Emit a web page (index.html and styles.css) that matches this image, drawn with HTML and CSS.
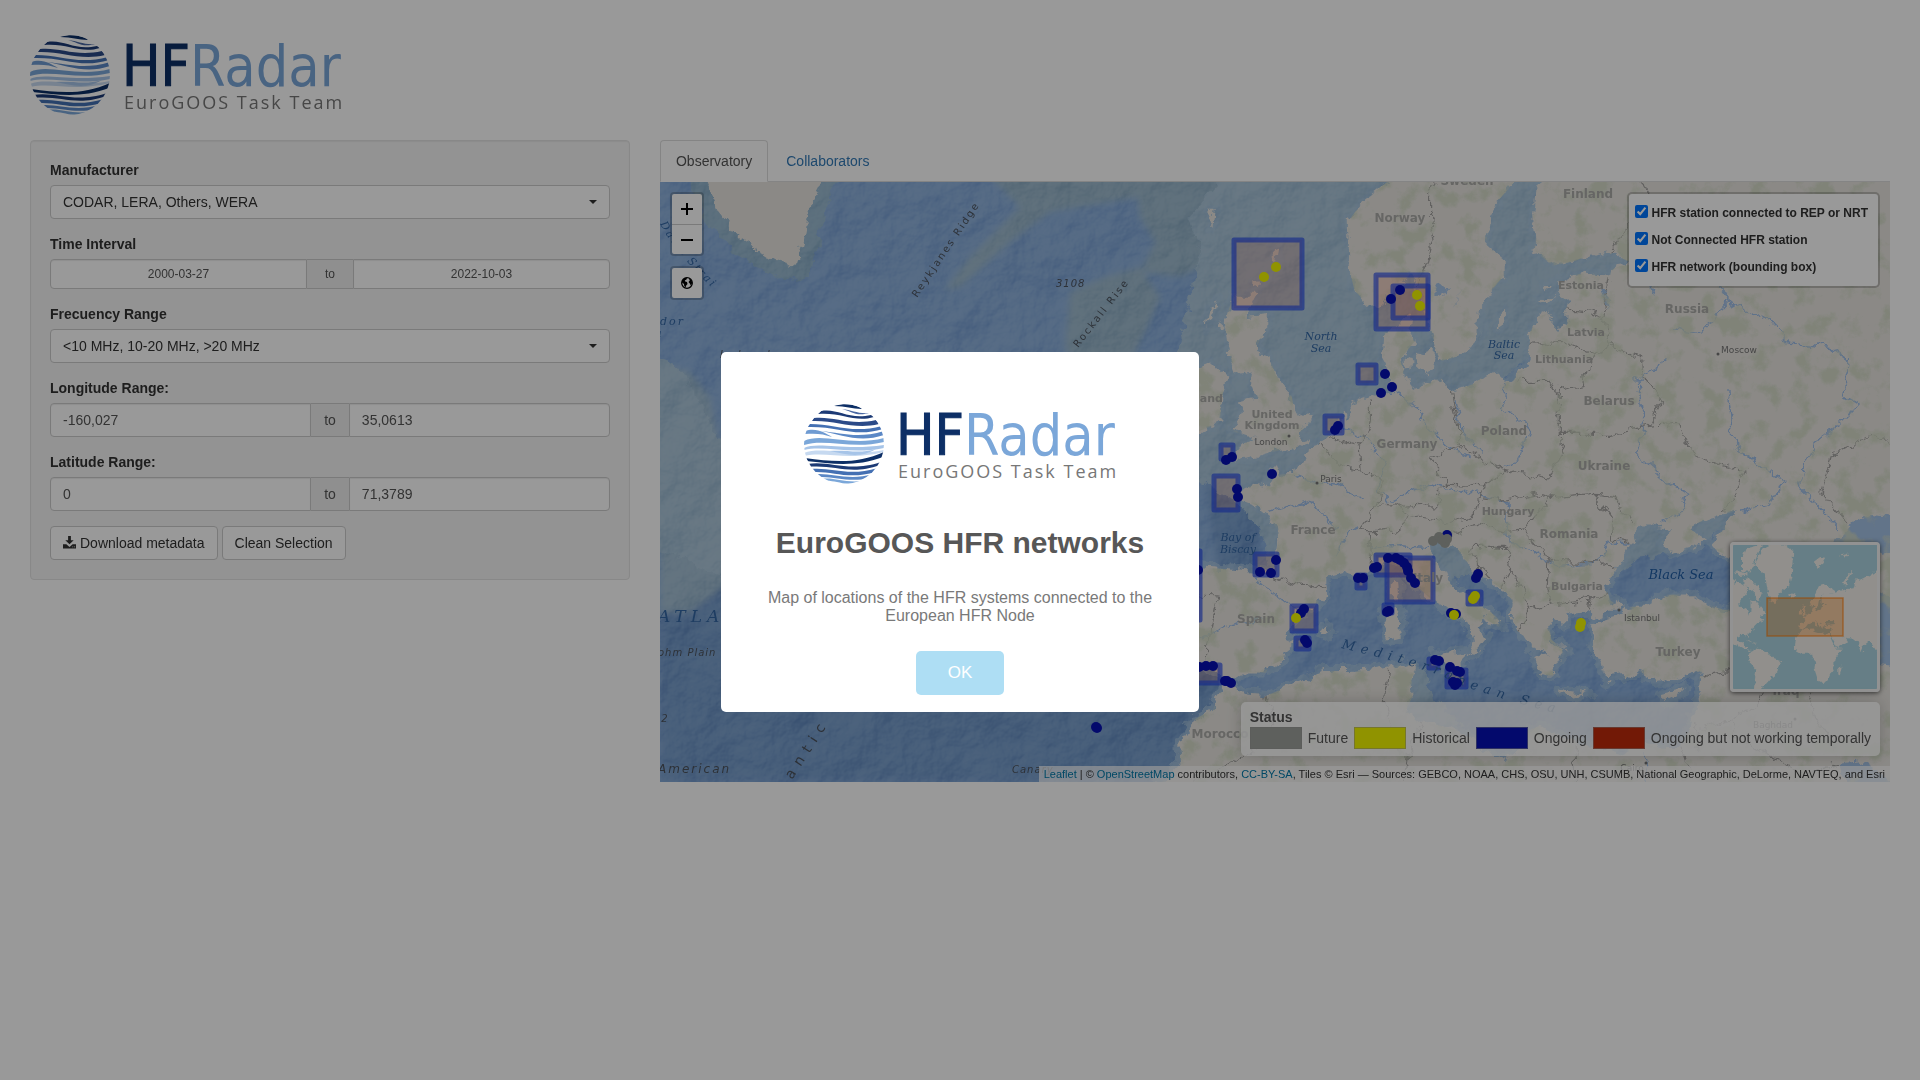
FILE: index.html
```html
<!DOCTYPE html>
<html lang="en">
<head>
<meta charset="utf-8">
<meta name="viewport" content="width=device-width, initial-scale=1">
<title>EuroGOOS HFR networks</title>
<link rel="stylesheet" href="styles.css">
</head>
<body>
<svg class="defs" aria-hidden="true">
  <defs>
    <clipPath id="globe-clip"><circle cx="40" cy="41" r="40"/></clipPath>
    <symbol id="logo" viewBox="0 0 312 82">
      <g clip-path="url(#globe-clip)">
        <path fill="#0d2f66" d="M30 3C40 0 52 1 58 6 48 6 42 3 30 3z"/>
        <path fill="#1c3a75" d="M17 8C34 5 44 17 67 12L70 14C50 20 38 9 14 11z"/>
        <path fill="#4a68a3" d="M38 6C48 7 54 11 65 10 52 14 47 8 38 6z"/>
        <path fill="#2b4a88" d="M10 15C30 13 46 23 72 17L75 21C50 27 32 17 8 18z"/>
        <path fill="#4470b3" d="M6 21C30 21 48 31 78 23L79 26C50 35 36 23 3 24z"/>
        <path fill="#6f9bd2" d="M1 28C12 24 22 30 28 34 20 31 12 30 1 31z"/>
        <path fill="#5b88c6" d="M17 28C38 30 54 36 80 28L80 32C56 40 38 32 17 28z"/>
        <path fill="#7ba7d9" d="M0 38C18 29 46 44 80 35L80 39C48 47 22 35 0 42z"/>
        <path fill="#a6c4e8" d="M0 45C14 38 40 48 80 42L80 45C48 52 20 42 0 47z"/>
        <path fill="#c6d9f0" d="M0 50C18 43 44 54 80 47L80 49C44 58 22 48 0 53z"/>
        <path fill="#a6c4e8" d="M26 48C44 47 56 51 72 46 56 56 40 51 26 48z"/>
        <path fill="#0d2f66" d="M1 55C30 59 54 61 80 49L79 54C52 64 30 61 2 58z"/>
        <path fill="#1c3a75" d="M3 61C26 57 44 70 77 59L76 62C46 73 30 61 4 64z"/>
        <path fill="#4470b3" d="M7 66C28 64 44 74 74 65L72 69C44 77 30 68 9 69z"/>
        <path fill="#5b88c6" d="M12 71C30 70 44 78 70 71L66 75C44 80 32 73 14 74z"/>
        <path fill="#7ba7d9" d="M17 76C30 74 40 80 58 78L52 81C38 82 30 77 20 78z"/>
      </g>
      <text class="logo-hf" x="92" y="52">HF</text>
      <text class="logo-radar" x="160" y="52">Radar</text>
      <text class="logo-sub" x="94" y="75">EuroGOOS Task Team</text>
    </symbol>
  </defs>
</svg>

<header class="page-header">
  <svg class="logo" role="img" aria-label="HFRadar EuroGOOS Task Team"><use href="#logo"/></svg>
</header>

<main class="row">
  <div class="col-side">
    <form class="well">
      <div class="group">
        <label for="maker">Manufacturer</label>
        <div class="select"><select id="maker"><option>CODAR, LERA, Others, WERA</option></select></div>
      </div>
      <div class="group">
        <label for="date-from">Time Interval</label>
        <div class="range small">
          <input id="date-from" type="text" value="2000-03-27">
          <span class="addon">to</span>
          <input type="text" aria-label="Time interval end" value="2022-10-03">
        </div>
      </div>
      <div class="group">
        <label for="freq">Frecuency Range</label>
        <div class="select"><select id="freq"><option>&lt;10 MHz, 10-20 MHz, &gt;20 MHz</option></select></div>
      </div>
      <div class="group">
        <label for="lon-min">Longitude Range:</label>
        <div class="range">
          <input id="lon-min" type="text" value="-160,027">
          <span class="addon">to</span>
          <input type="text" aria-label="Longitude maximum" value="35,0613">
        </div>
      </div>
      <div class="group">
        <label for="lat-min">Latitude Range:</label>
        <div class="range">
          <input id="lat-min" type="text" value="0">
          <span class="addon">to</span>
          <input type="text" aria-label="Latitude maximum" value="71,3789">
        </div>
      </div>
      <div class="actions">
        <button type="button" class="btn"><svg class="btn-icon" viewBox="0 0 14 14" aria-hidden="true"><path fill="currentColor" d="M5.5 0h3v4.500h3L7 9 2.500 4.500h3zM0 9h3.600L7 11.800 10.400 9H14v4.500H0zM10 11.200v1h1v-1zm2 0v1h1v-1z"/></svg>Download metadata</button>
        <button type="button" class="btn">Clean Selection</button>
      </div>
    </form>
  </div>

  <div class="col-main">
    <nav class="tabs">
      <a class="tab active" href="#observatory">Observatory</a>
      <a class="tab" href="#collaborators">Collaborators</a>
    </nav>
    <section class="map" id="observatory">
      <svg class="canvas" viewBox="0 0 1230 600" preserveAspectRatio="xMidYMid slice">
        <defs>
          <filter id="rough" x="0" y="0" width="1230" height="600" filterUnits="userSpaceOnUse">
            <feTurbulence type="fractalNoise" baseFrequency="0.09" numOctaves="4" seed="4"/>
            <feDisplacementMap in="SourceGraphic" scale="13" xChannelSelector="R" yChannelSelector="G"/>
          </filter>
          <filter id="relief" x="0" y="0" width="1230" height="600" filterUnits="userSpaceOnUse" color-interpolation-filters="sRGB">
            <feTurbulence type="fractalNoise" baseFrequency="0.022" numOctaves="5" seed="11"/>
            <feColorMatrix values="0 0 0 0 0  0 0 0 0 0  0 0 0 0 0  1 0 0 0 0"/>
            <feDiffuseLighting surfaceScale="9" diffuseConstant=".62" lighting-color="#fff"><feDistantLight azimuth="225" elevation="50"/></feDiffuseLighting>
          </filter>
          <filter id="vegetation" x="0" y="0" width="1230" height="600" filterUnits="userSpaceOnUse" color-interpolation-filters="sRGB">
            <feTurbulence type="fractalNoise" baseFrequency="0.045" numOctaves="6" seed="7"/>
            <feColorMatrix values="0 0 0 0 0.82  0 0 0 0 0.85  0 0 0 0 0.77  0 5 0 0 -2.5"/>
            <feComposite in2="SourceGraphic" operator="in"/>
          </filter>
          <filter id="soft"><feGaussianBlur stdDeviation="3"/></filter>
          <path id="med-curve" d="M681 466Q760 484 790 498T900 532"/>
          <path id="davis-curve" d="M0 42Q12 66 52 106"/>
        </defs>
        <rect width="1230" height="600" fill="#8db1dd"/>
        <g filter="url(#soft)">
          <path fill="#799fcd" d="M0 380L90 300 240 400 420 470 560 400 545 300 600 330 590 450 520 600 0 600z"/>
          <path fill="#9dbace" d="M325-10L360 25 310 75 285 108 300 105 350 60 390 30 480 15 520 40 560 0z"/>
          <path fill="#9dbace" d="M405 165L410 110 445 95 480 85 500 115 485 150 465 190 420 200z"/>
          <path fill="#a3bfd4" d="M0 183L30 190 50 215 60 270 85 330 70 400 30 430 0 430z"/>
          <path fill="#9dbace" d="M475-10L480 35 495 60 480 90 520 95 600 60 640-10z"/>
        </g>
        <g filter="url(#rough)">
          <path id="shelf" fill="#abc6da"/>
          <path id="rim" fill="none" stroke="#a9c6de" stroke-width="10" stroke-linejoin="round" opacity=".7"/>
          <path id="rim-greenland" fill="none" stroke="#98b9d0" stroke-width="30" stroke-linejoin="round"/>
        </g>
        <rect width="1230" height="600" filter="url(#relief)" class="relief"/>
        <g filter="url(#rough)">
          <path id="land" fill="#e8e5e0"/>
          <path id="water" fill="#a3c1e4"/>
          <path id="rivers" fill="none" stroke="#9dbde6" stroke-width="1.500"/>
          <path id="borders" fill="none" stroke="#a3a2a0" stroke-width="1.200"/>
        </g>
        <g filter="url(#vegetation)" opacity=".8"><path id="green"/></g>
        <g class="network">
          <rect x="574" y="58" width="68" height="68"/><rect x="716" y="93" width="52" height="54"/>
          <rect x="733" y="104" width="35" height="32"/><rect x="698" y="183" width="18" height="18"/>
          <rect x="665" y="234" width="17" height="17"/><rect x="561" y="263" width="12" height="14"/>
          <rect x="554" y="294" width="24" height="34"/><rect x="595" y="372" width="22" height="21"/>
          <rect x="716" y="373" width="34" height="20"/><rect x="727" y="376" width="46" height="44"/>
          <rect x="697" y="393" width="8" height="13"/><rect x="632" y="424" width="24" height="25"/>
          <rect x="636" y="456" width="13" height="11"/><rect x="490" y="483" width="70" height="18"/>
          <rect x="724" y="423" width="8" height="8"/><rect x="808" y="410" width="13" height="12"/>
          <rect x="769" y="477" width="9" height="9"/><rect x="787" y="488" width="19" height="17"/>
          <rect x="490" y="369" width="50" height="69"/>
        </g>
        <g class="country">
          <text x="740" y="40">Norway</text><text x="807" y="3">Sweden</text>
          <text x="928" y="16">Finland</text><text class="s11" x="921" y="107">Estonia</text>
          <text x="1027" y="131">Russia</text><text class="s11" x="926" y="154">Latvia</text>
          <text class="s11" x="904" y="181">Lithuania</text><text x="949" y="223">Belarus</text>
          <text x="944" y="288">Ukraine</text><text x="844" y="253">Poland</text>
          <text x="747" y="266">Germany</text><text class="s11" x="612" y="236">United</text>
          <text class="s11" x="612" y="247">Kingdom</text><text class="s11" x="541" y="220">Ireland</text>
          <text class="s11" x="848" y="333">Hungary</text><text x="653" y="352">France</text>
          <text x="768" y="400">Italy</text><text x="909" y="356">Romania</text>
          <text class="s11" x="917" y="408">Bulgaria</text><text x="596" y="441">Spain</text>
          <text x="1018" y="474">Turkey</text><text x="560" y="556">Morocco</text>
          <text x="1126" y="513">Iraq</text>
        </g>
        <g class="city">
          <text x="611" y="263">London</text><text x="671" y="300">Paris</text>
          <text x="1079" y="171">Moscow</text><text x="982" y="439">Istanbul</text>
          <text x="1113" y="546">Baghdad</text><text x="972" y="589">Cairo</text>
          <circle cx="629" cy="254" r="1.500"/><circle cx="657" cy="301" r="1.500"/><circle cx="1058" cy="172" r="1.500"/>
          <circle cx="959" cy="428" r="1.500"/><circle cx="1135" cy="537" r="1.500"/><circle cx="986" cy="581" r="1.500"/>
        </g>
        <g class="sea">
          <text x="661" y="158">North</text><text x="661" y="170">Sea</text>
          <text x="844" y="166">Baltic</text><text x="844" y="177">Sea</text>
          <text x="578" y="359">Bay of</text><text x="578" y="371">Biscay</text>
          <text class="big" x="1021" y="397">Black Sea</text>
          <text class="left" x="0" y="143">dor</text><text class="left" x="-5" y="155">a</text>
          <text class="ocean" x="-2" y="440">ATLA</text>
          <text class="med"><textPath href="#med-curve">Mediterranean Sea</textPath></text>
          <text class="davis"><textPath href="#davis-curve">Davis Strait</textPath></text>
        </g>
        <g class="feature">
          <text transform="translate(257 116)rotate(-56)">Reykjanes Ridge</text>
          <text transform="translate(418 166)rotate(-52)">Rockall Rise</text>
          <text class="slant" x="396" y="105">3108</text>
          <text class="slant labrador" x="60" y="176">Labrador</text>
          <text class="slant" x="-2" y="474">ohm Plain</text>
          <text class="slant" x="-6" y="540">22</text>
          <text class="slant wide" x="-2" y="591">American</text>
          <text class="slant" x="352" y="591">Canary</text>
          <text class="atlantic" transform="translate(132 598)rotate(-57)">antic R</text>
        </g>
        <g id="stations"></g>
      </svg>

      <div class="corner top-left">
        <div class="bar">
          <button type="button" aria-label="Zoom in"><svg viewBox="0 0 14 14"><path d="M7 1v12M1 7h12" stroke="#000" stroke-width="2"/></svg></button>
          <button type="button" aria-label="Zoom out"><svg viewBox="0 0 14 14"><path d="M1 7h12" stroke="#000" stroke-width="2"/></svg></button>
        </div>
        <div class="bar">
          <button type="button" aria-label="Whole world"><svg viewBox="0 0 14 14"><circle cx="7" cy="7" r="5.300" fill="#fff" stroke="#000" stroke-width="1.300"/><path d="M2 4.500L4.500 2 7 1.800 6.500 3.500 4.800 4.500 5.200 5.500 7 6 7.500 8 6.200 9.500 5.500 11.500 4.200 9.800 4 8 2 6.500zM9 2.500L11.500 4 12.200 7 10.800 9.500 9.800 7.500 8.500 6 9.800 4.500z"/></svg></button>
        </div>
      </div>

      <form class="corner layers">
        <label><input type="checkbox" checked>HFR station connected to REP or NRT</label>
        <label><input type="checkbox" checked>Not Connected HFR station</label>
        <label><input type="checkbox" checked>HFR network (bounding box)</label>
      </form>

      <div class="corner bottom-right">
        <svg class="minimap" viewBox="0 0 144 144" role="img" aria-label="Overview map">
          <defs>
            <filter id="jagged"><feTurbulence type="fractalNoise" baseFrequency="0.25" numOctaves="3" seed="2"/><feDisplacementMap in="SourceGraphic" scale="5" xChannelSelector="R" yChannelSelector="G"/></filter>
          </defs>
          <rect width="144" height="144" fill="#aad3df"/>
          <path id="world" fill="#f2efe9" filter="url(#jagged)"/>
          <rect x="34" y="53" width="76" height="38" fill="#ff7800" fill-opacity=".3" stroke="#ff7800" stroke-opacity=".6" stroke-width="1.500"/>
        </svg>
        <div class="legend">
          <strong>Status</strong>
          <ul>
            <li><i class="future"></i>Future</li>
            <li><i class="historical"></i>Historical</li>
            <li><i class="ongoing"></i>Ongoing</li>
            <li><i class="broken"></i>Ongoing but not working temporally</li>
          </ul>
        </div>
        <div class="attribution"><a href="#leaflet">Leaflet</a> | © <a href="#osm">OpenStreetMap</a> contributors, <a href="#license">CC-BY-SA</a>, Tiles © Esri — Sources: GEBCO, NOAA, CHS, OSU, UNH, CSUMB, National Geographic, DeLorme, NAVTEQ, and Esri</div>
      </div>
    </section>
  </div>
</main>

<div class="overlay">
  <div class="modal" role="dialog" aria-modal="true" aria-labelledby="modal-title">
    <svg class="logo" role="img" aria-label="HFRadar EuroGOOS Task Team"><use href="#logo"/></svg>
    <h2 id="modal-title">EuroGOOS HFR networks</h2>
    <p>Map of locations of the HFR systems connected to the European HFR Node</p>
    <button type="button" class="confirm">OK</button>
  </div>
</div>
<script src="map.js"></script>
</body>
</html>
```
FILE: styles.css
```css
* { box-sizing: border-box; }
body {
  margin: 0;
  font: 14px/20px "Liberation Sans", Arial, sans-serif;
  color: #333;
  background: #fff;
}
a { color: #337ab7; text-decoration: none; }
button, input, select { font: inherit; color: inherit; }
.defs { display: block; width: 0; height: 0; }

.page-header { padding: 34px 30px 24px; }
.logo { display: block; width: 312px; height: 82px; }
.logo-hf, .logo-radar { font-family: "DejaVu Sans Condensed", Lato, sans-serif; font-size: 57px; }
.logo-hf { fill: #0d2f66; stroke: #0d2f66; stroke-width: 1px; }
.logo-radar { fill: #7ba7d9; }
.logo-sub { fill: #777; font-family: "Open Sans", sans-serif; font-size: 18px; letter-spacing: 2px; }

.row { display: flex; padding: 0 15px; }
.col-side { width: 33.333%; padding: 0 15px; }
.col-main { flex: 1; min-width: 0; padding: 0 15px; }

.well {
  padding: 19px;
  background: #f5f5f5;
  border: 1px solid #e3e3e3;
  border-radius: 4px;
  box-shadow: inset 0 1px 1px rgba(0, 0, 0, .05);
}
.group { margin-bottom: 15px; }
.group label { display: block; margin-bottom: 5px; font-weight: bold; }
.select { position: relative; }
.select::after {
  content: "";
  position: absolute;
  top: 15px;
  right: 13px;
  border: 4px solid transparent;
  border-top-color: #333;
  border-bottom: 0;
}
.select select, .range input {
  height: 34px;
  padding: 0 12px;
  background: #fff;
  border: 1px solid #ccc;
  border-radius: 4px;
}
.select select { display: block; width: 100%; appearance: none; }
.range { display: flex; }
.range input {
  flex: 1;
  min-width: 0;
  color: #555;
  box-shadow: inset 0 1px 1px rgba(0, 0, 0, .075);
}
.range input:first-child { border-radius: 4px 0 0 4px; }
.range input:last-child { border-radius: 0 4px 4px 0; }
.addon {
  display: flex;
  align-items: center;
  padding: 0 13px;
  color: #555;
  background: #eee;
  border: solid #ccc;
  border-width: 1px 0;
}
.range.small input { height: 30px; font-size: 12px; text-align: center; }
.small .addon { padding: 0 18px; font-size: 12px; }
.actions { display: flex; gap: 4px; }
.btn {
  height: 34px;
  padding: 0 12px;
  background: #fff;
  border: 1px solid #ccc;
  border-radius: 4px;
}
.btn-icon { width: 13px; height: 13px; margin-right: 4px; vertical-align: -1px; }

.tabs { display: flex; gap: 2px; border-bottom: 1px solid #ddd; }
.tab { margin-bottom: -1px; padding: 10px 15px; border: 1px solid transparent; border-radius: 4px 4px 0 0; }
.tab.active { color: #555; background: #fff; border-color: #ddd #ddd #fff; }

.map { position: relative; height: 600px; overflow: hidden; font-size: 12px; }
.canvas { display: block; width: 100%; height: 100%; }
.relief { mix-blend-mode: soft-light; opacity: .45; }
.country text { font: bold 12px "DejaVu Sans", sans-serif; fill: #aaaaa7; text-anchor: middle; }
.country .s11 { font-size: 11px; }
.city { fill: #757575; }
.city text { font: 9px "DejaVu Sans", sans-serif; text-anchor: middle; }
.sea text { font: italic 11px "DejaVu Serif", serif; fill: #3366a3; text-anchor: middle; }
.sea .big { font-size: 13px; fill: #1f5ca3; }
.sea .left, .sea .ocean, .sea .med, .sea .davis { text-anchor: start; }
.sea .left { letter-spacing: 2px; }
.sea .ocean { font-size: 17px; letter-spacing: 5px; }
.sea .med { font-size: 13px; letter-spacing: 6px; }
.sea .davis { letter-spacing: 2px; }
.feature text { font: 10px "DejaVu Sans", sans-serif; fill: #4c535d; letter-spacing: 2px; }
.feature .slant { font-style: italic; letter-spacing: 1px; }
.feature .labrador { letter-spacing: 3px; }
.feature .wide { font-size: 12px; letter-spacing: 2px; }
.feature .atlantic { font-size: 14px; letter-spacing: 7px; }
.network rect { fill: #ff7850; fill-opacity: .2; stroke: #2346e6; stroke-opacity: .65; stroke-width: 5; stroke-linejoin: round; }
.s-ongoing { fill: #0610b4; }
.s-historical { fill: #f0f500; }
.s-future { fill: #9da09b; }

.corner { position: absolute; }
.top-left { top: 10px; left: 10px; display: grid; gap: 10px; }
.bar { width: 34px; border: 2px solid rgba(0, 0, 0, .2); border-radius: 4px; background: #fff; background-clip: padding-box; }
.bar button { display: flex; align-items: center; justify-content: center; width: 30px; height: 30px; padding: 0; background: none; border: 0; }
.bar button + button { border-top: 1px solid #ccc; }
.bar svg { width: 14px; height: 14px; }
.layers {
  top: 10px;
  right: 10px;
  display: grid;
  gap: 7px;
  padding: 9px 10px 9px 6px;
  background: #fff;
  background-clip: padding-box;
  border: 2px solid rgba(0, 0, 0, .2);
  border-radius: 5px;
}
.layers label { display: flex; gap: 4px; font-weight: bold; }
.layers input { width: 13px; height: 13px; margin: 2px 0 0; }
.bottom-right { right: 0; bottom: 0; display: flex; flex-direction: column; align-items: flex-end; }
.minimap { width: 150px; height: 150px; margin: 0 10px 10px; border: 3px solid #f4f4f4; border-radius: 4px; box-shadow: 0 1px 5px rgba(0, 0, 0, .65); }
.legend {
  margin: 0 10px 10px;
  padding: 6px 9px 7px;
  font-size: 14px;
  line-height: 18px;
  color: #555;
  background: rgba(255, 255, 255, .8);
  border-radius: 5px;
  box-shadow: 0 0 15px rgba(0, 0, 0, .2);
}
.legend strong { display: block; }
.legend ul { display: flex; gap: 6px; margin: 0; padding: 0; list-style: none; }
.legend li { display: flex; align-items: center; gap: 6px; height: 23px; }
.legend i { width: 52px; height: 22px; border: 1px solid rgba(150, 150, 150, .5); }
.future { background: #9da09b; }
.historical { background: #f0f500; }
.ongoing { background: #0610b4; }
.broken { background: #bf2b0a; }
.attribution { padding: 0 5px; font-size: 11px; line-height: 16px; background: rgba(255, 255, 255, .7); }
.attribution a { color: #0078a8; }

.overlay {
  position: fixed;
  inset: 0;
  display: flex;
  align-items: center;
  justify-content: center;
  padding-bottom: 16px;
  background: rgba(0, 0, 0, .4);
}
.modal {
  display: flex;
  flex-direction: column;
  align-items: center;
  width: 478px;
  padding: 51px 42px 17px;
  text-align: center;
  background: #fff;
  border-radius: 5px;
}
.modal h2 { margin: 38px 0 26px; font-size: 30px; line-height: 40px; color: #575757; }
.modal p { margin: 0 0 26px; font-size: 16px; line-height: 18px; color: #797979; }
.confirm { width: 88px; height: 44px; font-size: 17px; color: #fff; background: #aedef4; border: 0; border-radius: 5px; }
```
FILE: map.js
```js
// Coastlines are "lon,lat" lists; they are drawn in Web Mercator.
const continent = "56,66 25,66 25,65 22.5,63.8 21.5,63.1 21.3,62 21.5,61 21.3,60.6 22.3,60.2 23,59.9 24.9,60.1 26.5,60.4 28.5,60.6 29.2,60.2 30.2,59.95 29,59.9 28,59.7 27.9,59.45 26,59.6 24.5,59.45 23.5,59.2 23.5,58.7 24.5,58.3 24.3,57.8 24.3,57.2 23.7,57 23,57.4 22.6,57.75 21.7,57.55 21,56.8 21,55.5 20.6,55 19.9,54.9 19.5,54.4 18.8,54.4 18.4,54.8 17,54.7 16,54.25 14.3,53.9 13.7,54.2 13.4,54.6 12.5,54.4 11,54 10.8,54.3 10,54.5 9.9,55 9.6,55.5 10.3,56 10.9,56.4 10.3,56.9 10.6,57.7 9.5,57.2 8.2,56.8 8.1,55.6 8.7,55 8.7,54.3 9,53.9 8.2,53.5 7,53.6 6,53.4 5.2,53.2 5.4,52.6 5,52.5 4.7,52.9 4.1,52 3.5,51.5 2.5,51.1 1.6,50.9 1.5,50.2 0.2,49.7 0.2,49.4 -1.1,49.35 -1.3,49.7 -1.9,49.7 -1.6,48.65 -3,48.8 -4.7,48.5 -4.5,47.9 -2.8,47.5 -2.1,47.1 -1.2,46.1 -1.1,45.5 -1.3,44.5 -1.6,43.4 -3.8,43.5 -5.8,43.65 -8,43.75 -9.2,43.1 -8.8,42.1 -8.7,41 -9,39.9 -9.5,38.7 -8.8,38.4 -8.9,37 -7.4,37.2 -6.4,36.8 -5.6,36 -4.5,36.7 -2.2,36.7 -1.8,37.2 -0.7,37.6 -0.5,38.3 0.2,38.75 -0.3,39.5 0.7,40.7 2.2,41.35 3.2,41.9 3.1,43.1 4.6,43.4 6.2,43.05 7.5,43.8 8.8,44.4 10.2,43.95 10.5,42.95 12.2,41.75 13.6,41.2 14.5,40.6 15.7,40 16.1,38.7 15.7,37.95 16.6,38.5 17.2,39.1 16.6,39.7 16.9,40.45 18.3,39.85 18.5,40.2 17.5,40.9 16,41.5 16.1,41.9 15,42 14,42.7 13.5,43.6 12.4,44.3 12.3,45.3 13.6,45.7 13.6,45 14.3,45.2 15,44.5 15.9,43.6 17.5,42.9 19,42.1 19.5,41.5 19.4,40.4 20.2,39.5 21.1,38.4 22.8,38 21.4,37.8 21.7,36.9 22.5,36.5 23.1,36.5 22.9,37.4 24,37.8 23.9,38.3 22.9,39 22.7,40 22.9,40.5 23.9,40 24.3,40.2 24,40.7 26,40.9 26.7,40.5 28,41 28.9,41 29,41.2 28.1,41.6 27.7,42.6 28.6,43.6 29.6,45 30.8,46.4 32,46.4 33.6,46.1 32.6,45.4 33.5,44.6 35.4,45 36.5,45.4 35,46.2 36.7,46.8 39.2,47.2 38,46.3 37.5,45.6 36.8,45.1 38.5,44.4 40,43.4 41.5,42.6 41.6,41.6 40,41 38,41 36,41.6 35,42 33,42 31.2,41.2 29.2,41.2 29.1,40.9 29.3,40.75 27.5,40.4 26.2,40 26.8,39.3 26.5,38.5 27.3,37.5 27.5,36.7 28.5,36.8 29.3,36.3 30.6,36.8 32,36.1 34,36.3 36,36.8 35.8,35.8 36,34.6 35,33 34.5,31.6 34,31.2 32.5,31.2 31,31.5 29,30.8 27,31.2 25,31.6 23.2,32.2 22,32.9 20,32.2 20,30.9 19,30.3 17,31 15.5,32.3 13,32.9 11,33.3 10.1,34 10.7,35 10.6,36.2 11,37 9.8,37.3 7,36.9 5,36.8 3,36.8 0,35.8 -2,35.1 -4,35.2 -5.3,35.8 -6,35.8 -6.8,34.1 -8.5,33.3 -9.8,31.5 -9.7,30 -11,28.8 -13,27.8 -14,26 56,26";
const scandinavia = "22,66 21.5,65 20.5,63.8 18.5,62.8 17.4,62 17.2,60.8 18.8,60.1 18.8,59.5 17.5,58.7 16.6,57.8 16.4,56.8 15.8,56.1 14.4,55.6 13,55.4 12.7,56.2 11.9,57.6 11.2,58.9 10.6,59.6 9.5,58.9 8,58.1 6.8,58.1 5.6,58.8 5.2,59.6 5.1,60.7 5,61.8 6.5,62.7 8.5,63.4 10,64 12,65.5 12,66";
const greenland = "-52.5,66 -52,64 -50.5,62.3 -48.5,61.1 -45.5,60.2 -43.5,59.9 -42.8,61 -42.2,62.5 -40.5,64 -40,66";
const islands = [
  "-5.7,50.1 -3.5,50.3 -2,50.6 0.3,50.8 1.4,51.2 0.7,51.5 1.7,52.5 0.3,52.9 0.1,53.6 -1.3,54.7 -2,55.8 -3.2,56 -2.1,57 -2,57.7 -4,57.6 -3.1,58.6 -5,58.6 -5.8,57.4 -5.6,56.3 -5.2,55.4 -4.8,54.8 -3.2,54.9 -3.4,54.3 -2.9,53.5 -4.5,53.3 -4.2,52.8 -4.7,52.1 -5.2,51.8 -3.3,51.4 -2.8,51.5 -4.2,51.1 -5.1,50.4",
  "-6.2,52.2 -8,51.8 -10.1,51.6 -9.5,53.3 -10,54.2 -8.5,54.3 -8.3,55 -7,55.3 -5.6,54.6 -6.1,53.5",
  "-1.5,60.6 -1,60.7 -1.2,60 -1.5,60", "-3.3,59.2 -2.7,59.2 -2.8,58.8 -3.3,58.9", "-7.2,62.2 -6.6,62.2 -6.8,61.6",
  "-6.3,58.4 -7.2,57.8 -7.4,57 -6.9,57.6", "-6.5,57.5 -5.8,57.2 -6.3,57.1",
  "11.2,55.7 12.5,56 12.4,55.3 11.9,54.8 11.1,55.2", "9.9,55.5 10.7,55.4 10.6,55 10,55.1",
  "18.2,57.5 19,57.9 18.7,57.2 18.2,57", "16.5,56.4 17,57.2 16.7,56.7", "21.9,58.4 23.2,58.6 22.5,58.2", "22.2,59 22.8,59 22.6,58.8",
  "8.2,40.9 9.3,41.2 9.7,40.4 9.5,39.2 8.5,39 8.4,40", "8.7,42.5 9.4,43 9.5,42 9.2,41.4 8.7,41.8",
  "12.5,38 15.6,38.2 15.1,37.4 15.1,36.7 14,37 12.5,37.6", "23.6,35.5 26.2,35.2 24.7,34.95 23.6,35.25",
  "32.4,35 33,35.3 34.5,35.6 34,35 33,34.6", "2.4,39.6 3.1,39.9 3.4,39.5 3,39.3", "23.2,39 24.5,38.1 23.8,38.5", "27.8,36.3 28.2,36.4 27.9,35.9"
];
const shelves = [
  "-8,66 -5,64 -9,62 -8,60.5 -9,58 -10,56 -12,53.5 -11,51 -8,49 -5,47.8 -3,46.5 -2,45 -1.8,43.7 0,45 5,50 15,53 32,60 25,66",
  "-58,56 -54,55.2 -52,53.5 -50.5,51.5 -49,50 -47,47.5 -49,45 -50,43 -54,44.5 -58,45",
  "12,46 14,45.8 16,43.5 14.2,42.8 12,44", "10,37.4 11.8,37 12.5,35 15,33 13,32.5 10,33",
  "28.5,43 30.5,44.3 33,44.5 35.5,44.9 40,47.5 29,47"
];
const lakes = [
  "12.5,58.6 13.2,59.2 14,58.9 13.3,58.5", "14.3,57.9 14.9,58.8 14.6,58.3", "30.8,60.2 30,61.2 31,61.7 32.8,60.8 32.5,60.2",
  "34.5,61.8 35,62.4 36.4,61 35.4,60.9", "27.2,58.9 27.9,58.9 27.8,58 27.4,58.4", "37.5,59 38.5,58.3 39,58 38.3,58.7",
  "49,46.3 51,47 54,46.8 54,45 51,44.5 50.5,42.5 54,41.5 54,37 50,37.4 49,38.5 49.4,40.3 47.6,42.8 47,44.5", "48,30 50,30.2 54,28 54,26 50,27"
];
const rivers = [
  "31,59.9 32,58.5", "33.5,57 36,56.8 38.4,58.3 42,57.4 44,56.3 47.500,56.1 49,55.5 48.5,53.7 50,53.2 48,52 46,51 45,49.5 44.6,48.6 46.5,47.5 48,46.2",
  "33,55.5 30.5,54.500 31,52.2 30.500,50.5 33,49 35,48.2 34,47 32.5,46.500", "38.500,54 39,51 41,50 43.5,49 42,47.6 39.5,47.1",
  "8.6,47.7 12,48.800 16.4,48.2 19,47.7 19,45.400 21,44.800 23,43.900 27,44.1 28,45.3 29.600,45.2",
  "8.6,47.7 7.7,48.6 8.3,50 6.8,51.3 4.3,51.9", "15.8,50.3 13.7,51 12,52 11,53.1 9,53.8", "18.6,49.800 20,50.2 21,52 18.7,53 18.8,54.3",
  "17,50.5 15,51.8 14.5,53.5", "4,44.5 4.8,45.8 6,46.2", "4.2,46 1.800,47.800 -0.5,47.4 -2,47.2", "6,47.9 4,48.8 2.3,48.900 0.4,49.4", "7,45.1 9.500,45.1 12.2,45",
  "-3,42.9 -1,41.8 0.7,40.8", "-2.5,40.5 -5.5,39.9 -8.8,38.8", "31,31 31.3,30 31,28"
];
const borders = [
  "11.2,59 12,60 12.5,61 12.2,62 12.2,63 14,64.5", "28,60.5 30,61.8 31.5,62.9 30,64", "28,59.4 27.5,58 27.6,57.3", "24.3,57.9 26,57.8 27.5,57.5",
  "21,56.2 24,56.3 26.6,55.7 28.2,56.1 27.6,57.4", "26.6,55.7 25.6,54.2 23.5,53.9 22.8,54.4 20,54.4", "28.2,56.1 30.8,55.6 31,54.6 32.6,53.4 31.6,52.1",
  "31.6,52.1 28,51.6 23.6,51.6 23.6,53.9", "31.6,52.1 34,52.2 35.5,50.4 38,49.9 40,49.6 38.2,47.2", "14.2,53.9 14.6,52.5 15,51 16.5,50.3 18.8,49.6 22.5,49.1 24,50.6 23.6,51.6",
  "15,51 12.2,50.3 13.8,48.8 16.9,48.7 16,46.9 13.7,46.5 10.5,46.9 9.5,47.5 13,47.6 12.9,48.2 13.8,48.8", "9.5,47.5 7.6,47.6 8.1,49 6.2,49.5 6,51 7,52.3 7,53.3",
  "2.5,51.1 4.2,50 6.2,49.5", "3.4,51.4 6,51", "7.6,47.6 6.1,46.2 7,45.9 9,46 10.5,46.9", "7,45.9 7,44.2 7.5,43.8", "-1.7,43.3 0,42.7 3.1,42.4", "-8.8,42 -6.5,41.9 -7,40 -7.4,38.5 -7.4,37.2",
  "16.9,48 18.8,47.8 22.2,48.3 22.8,48 20.5,46.1 18.8,45.9 16.3,46.6", "16.9,48.7 18.8,49.6", "22.8,48 26.6,48.2 28.1,46.8 28.2,45.5 29.6,45.3", "26.6,48.2 28.5,48.1 30,46.5",
  "20.5,46.1 22.5,44.6 22.7,44.2 27,44.1 28.6,43.7", "22.7,44.2 22.5,42.3 23,41.3 26.4,41.7 28,42", "13.7,45.5 16.3,46.6", "15.9,45 19,45 19.2,43.5 18.5,42.5", "15.9,45 16.2,44.1 17.6,43",
  "19.2,43.5 20.5,42.2 21,41 20,39.7", "21,41 23,41.3", "26.4,41.7 26.2,40.8", "36,36.2 37,36.7 42.3,37.2 44.8,39.7 43.5,41.1 41.6,41.5", "42.3,37.2 41,34.4 38.8,33.4 36,32.6",
  "38.8,33.4 39.2,32 45,29.2 48,30", "44.8,37.2 45.5,35.8 46,33.5 48,31", "40,43.5 44,42.7 47,41.5 48.5,41.8", "-2,35.1 -1.5,32.5 -5,30 -8.6,28.7",
  "8.6,36.9 8.2,34.5 9.2,32 10.2,30.3 11.5,33.2", "10.2,30.3 9.8,28", "25,31.6 25,28", "49,46.5 46.6,48.4 47.5,50.4 51,51.6 54,50.7", "34.3,31.3 35,29.5", "35.5,33.2 35.6,31"
];
const world = [
  "-110,70 -95,72 -85,70 -81,68 -87,65 -94,61 -93,58 -83,55 -80,51 -78,55 -78,62 -70,61 -65,58 -60,55 -56,52 -65,50 -60,46 -66,44 -70,42 -75,38 -76,35 -81,31 -80,25.5 -83,29 -90,30 -97,27 -97,22 -91,18.5 -87,21 -88,16 -83,14 -83,9 -77,8.5 -80,7 -92,14 -105,20 -115,30",
  "-80,73.5 -70,70.5 -62,66.5 -66,62 -73,65 -74,68 -88,70 -88,73", "-90,80 -85,82 -62,82.8 -72,79 -78,76 -90,76", "-115,73 -100,73.5 -102,69 -112,69", "-100,76 -92,76 -80,75 -92,74",
  "-73,78 -60,82 -40,83.3 -18,81.500 -20,75 -24,70 -38,66 -43,60 -50,62 -54,68 -58,75", "-24,65.5 -20,66.3 -14,65 -19,63.4",
  "-77,8 -71,12 -61,10 -51,4 -44,-3 -35,-6 -39,-14 -41,-22 -48,-27 -57,-36 -65,-42 -66,-50 -74,-50 -72,-30 -70,-18 -81,-5 -80,1",
  "-6,35.8 10,37 11,33.5 20,31 32,31 37,21 43,12 51,11.5 40,-4 40,-15 35,-22 32,-28 26,-34 18,-34 12,-17 13,-8 9,1 9,4.5 -7,4.5 -13,8 -17,14 -16,24 -10,30",
  "49,-12 50,-16 47,-25 44,-24 44,-17", "-85,22 -80,23 -75,20 -80,21.5", "-73,19.8 -69,19 -74,18.2", "80,9 82,7 80,6",
  "105,77 98,76 80,73 70,73 67,69 55,68.5 44,67 34,66 41,67 40,68 28,71 18,70 10,63 5,61 7,58 11,59 13,55.5 17,59 18,62 24,65.8 22,63 22,60.3 29,60 23,59 21,55.5 14,54 10,57.5 8,54 2,51 -4,48.5 -1,46 -2,43.5 -9,43 -9,37 -5,36 0,39 4,43.4 9,44.3 16,38.5 18,40 12.5,45 19,42 23,36.5 24,40.5 29,41 30,46 36,46 41,42 31,41.3 27,39 28,36.7 36,36.8 35,32 35,28 39,21 44,12.7 59,22 56,26 48,30 58,25.5 67,25 73,20 77,8 80,15 89,22 94,16 98,10 105,2",
  "-5,50 1,51 -2,56 -2,58 -5,58.5 -4,54", "-10,52 -6,52 -6,55 -10,54", "11,79 20,80.2 27,80 17,76.7", "52,71 56,74 68,77 58,73 57,71", "48,80.5 60,81 55,80"
];

const mercator = lat => Math.log(Math.tan(Math.PI / 4 + lat * Math.PI / 360));
const mainMap = (lon, lat) => [630.8 + 11.378 * lon, 940 - 651.9 * mercator(lat)];
const overview = (lon, lat) => [73 + 0.711 * lon, 112 - 40.74 * mercator(lat)];
const trace = (list, project, close) => list.map(line => "M" + line.split(" ").map(pair => {
  const [lon, lat] = pair.split(",").map(Number);
  return project(lon, lat).map(v => v.toFixed(1)).join(" ");
}).join("L") + (close ? "z" : "")).join("");
const draw = (id, d) => document.getElementById(id).setAttribute("d", d);

const land = trace([continent, scandinavia, greenland, ...islands], mainMap, true);
draw("land", land);
draw("green", trace([continent, scandinavia, ...islands.slice(0, 2)], mainMap, true));
draw("rim", land);
draw("rim-greenland", trace([greenland], mainMap, true));
draw("shelf", trace(shelves, mainMap, true));
draw("water", trace(lakes, mainMap, true));
draw("rivers", trace(rivers, mainMap, false));
draw("borders", trace(borders, mainMap, false));
draw("world", trace(world, overview, true));

// Stations: pixel positions on the map pane, by status.
const stations = [
  ["ongoing", "740,108 731,117 725,192 732,205 721,211 678,244 675,248 572,275 566,278 612,292 577,307 578,315 616,378 600,390 611,391 698,396 703,396 714,386 717,385 728,376 736,376 740,378 744,381 747,385 748,389 751,396 755,401 727,430 729,429 644,427 641,431 645,458 647,461 539,485 546,484 553,484 565,499 567,499 571,501 787,353 818,392 816,396 791,431 796,432 775,478 779,479 790,485 797,489 800,490 793,500 795,503 797,501 436,545 437,546 538,388"],
  ["future", "773,359 779,355 785,361 787,357 782,358"],
  ["historical", "616,85 604,95 757,113 760,124 636,436 815,414 813,417 794,433 921,441 920,445"]
];
const layer = document.getElementById("stations");
for (const [status, points] of stations) {
  for (const point of points.split(" ")) {
    const [x, y] = point.split(",");
    const dot = document.createElementNS("http://www.w3.org/2000/svg", "circle");
    dot.setAttribute("cx", x);
    dot.setAttribute("cy", y);
    dot.setAttribute("r", 5);
    dot.setAttribute("class", "s-" + status);
    layer.append(dot);
  }
}
```
